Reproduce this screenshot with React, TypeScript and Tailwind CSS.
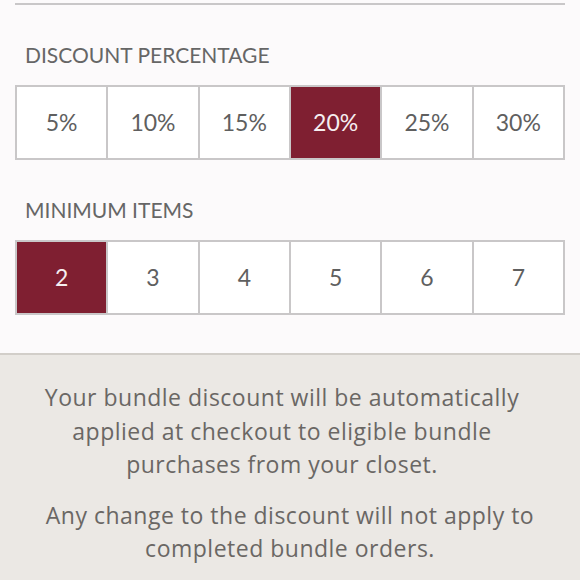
import React from "react";

const discounts = ["5%", "10%", "15%", "20%", "25%", "30%"];
const minimums = ["2", "3", "4", "5", "6", "7"];

type OptionRowProps = {
  options: string[];
  selected: string;
  onSelect: (v: string) => void;
};

const OptionRow: React.FC<OptionRowProps> = ({ options, selected, onSelect }) => {
  return (
    <div className="flex h-[75px] border-2 border-[#c9c7c8] bg-white">
      {options.map((opt, i) => {
        const active = opt === selected;
        return (
          <button
            key={opt}
            onClick={() => onSelect(opt)}
            className={
              "flex flex-1 items-center justify-center text-[23px] " +
              (i > 0 ? "border-l-2 border-[#c9c7c8] " : "") +
              (active ? "bg-[#7f1f31] text-[#f6eef0]" : "bg-white text-[#5f5f5f]")
            }
          >
            {opt}
          </button>
        );
      })}
    </div>
  );
};

export default function App() {
  const [discount, setDiscount] = React.useState<string>("20%");
  const [minItems, setMinItems] = React.useState<string>("2");

  return (
    <div
      className="flex h-[580px] w-[580px] flex-col overflow-hidden bg-[#fcfafb]"
      style={{ fontFamily: "Lato, 'Open Sans', sans-serif" }}
    >
      <div className="flex flex-col px-[15px] pb-[38px] pt-[3px]">
        <div className="h-[2px] bg-[#c9c7c8]" />

        <div className="mt-[38px] pl-[10px] text-[21px] leading-[24px] text-[#666]">
          DISCOUNT PERCENTAGE
        </div>
        <div className="mt-[18px]">
          <OptionRow options={discounts} selected={discount} onSelect={setDiscount} />
        </div>

        <div className="mt-[38px] pl-[10px] text-[21px] leading-[24px] text-[#666]">
          MINIMUM ITEMS
        </div>
        <div className="mt-[18px]">
          <OptionRow options={minimums} selected={minItems} onSelect={setMinItems} />
        </div>
      </div>

      <div className="flex flex-1 flex-col items-center border-t-2 border-[#d2cec9] bg-[#ebe8e4] px-2 pt-[26px] text-center font-['Open_Sans',sans-serif] text-[23px] leading-[33.5px] tracking-[0.5px] text-[#6a6764]">
        <p className="pr-[16px]">
          Your bundle discount will be automatically
          <br />
          applied at checkout to eligible bundle
          <br />
          purchases from your closet.
        </p>
        <p className="mt-[17px]">
          Any change to the discount will not apply to
          <br />
          completed bundle orders.
        </p>
      </div>
    </div>
  );
}
